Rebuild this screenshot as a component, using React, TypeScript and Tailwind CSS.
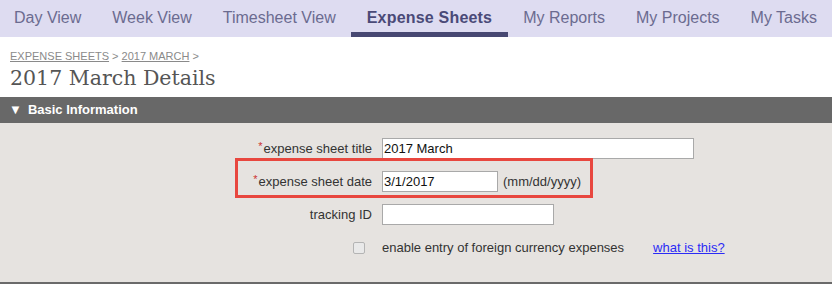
export default function App() {
  const tabs = [
    "Day View",
    "Week View",
    "Timesheet View",
    "Expense Sheets",
    "My Reports",
    "My Projects",
    "My Tasks",
  ];
  const active = "Expense Sheets";

  return (
    <div className="w-[832px] h-[284px] overflow-hidden bg-white font-['Liberation_Sans',Arial,sans-serif]">
      {/* top tabs */}
      <div className="h-[37px] bg-[#dedcf1] flex">
        <div className="flex -ml-[1.5px]">
          {tabs.map((t) => (
            <div
              key={t}
              className={`h-[37px] px-[15.5px] pt-[9px] text-[16px] leading-[18px] whitespace-nowrap ${
                t === active
                  ? "font-bold text-[#4a4a78] border-b-[5px] border-[#474872] tracking-[0.2px]"
                  : "text-[#6b6b90]"
              }`}
            >
              {t}
            </div>
          ))}
        </div>
      </div>

      {/* breadcrumb + title */}
      <div className="pl-[10px] pt-[12.5px] h-[60px]">
        <div className="text-[11px] leading-[13px] text-[#8a8a8a]">
          <a className="underline">EXPENSE SHEETS</a> &gt; <a className="underline">2017 MARCH</a> &gt;
        </div>
        <h1 className="mt-[2px] text-[20.5px] leading-[26px] text-[#555] font-['DejaVu_Serif',Georgia,serif]">
          2017 March Details
        </h1>
      </div>

      {/* section header */}
      <div className="h-[26px] bg-[#686868] flex items-center pl-[9px] text-white text-[13px] font-bold">
        <span className="text-[13px] mr-[6px]">▼</span>
        Basic Information
      </div>

      {/* form body */}
      <div className="relative h-[161px] bg-[#e6e3e0] border-b-2 border-[#6a6a6a] pt-[15px] text-[13px] text-[#333]">
        <div className="grid grid-cols-[372px_1fr] gap-y-[12px] items-center">
          <div className="text-right">
            <span className="text-[#cc3333] text-[11px] align-top relative top-[-1px] mr-[1px]">*</span>
            expense sheet title
          </div>
          <div className="pl-[10px]">
            <input
              readOnly
              value="2017 March"
              className="block w-[312px] h-[21px] bg-white border border-[#a9a9a9] px-[1px] text-[13px] text-[#111] outline-none"
            />
          </div>

          <div className="text-right">
            <span className="text-[#cc3333] text-[11px] align-top relative top-[-1px] mr-[1px]">*</span>
            expense sheet date
          </div>
          <div className="pl-[10px] flex items-center">
            <input
              readOnly
              value="3/1/2017"
              className="block w-[116px] h-[21px] bg-white border border-[#a9a9a9] px-[1px] text-[13px] text-[#111] outline-none"
            />
            <span className="ml-[5px]">(mm/dd/yyyy)</span>
          </div>

          <div className="text-right">tracking ID</div>
          <div className="pl-[10px]">
            <input
              readOnly
              value=""
              className="block w-[172px] h-[21px] bg-white border border-[#a9a9a9] px-[1px] text-[13px] outline-none"
            />
          </div>

          <div className="h-[21px] flex items-center justify-end pr-[7px]">
            <div className="w-[12px] h-[12px] rounded-[2px] border border-[#b4b4b4] bg-[#e9e9e9]" />
          </div>
          <div className="pl-[10px] h-[21px] flex items-center">
            <span>enable entry of foreign currency expenses</span>
            <a className="ml-[29px] text-[#2b2bf5] underline">what is this?</a>
          </div>
        </div>

        {/* highlight box */}
        <div className="absolute left-[235px] top-[35px] w-[358px] h-[40px] border-[3px] border-[#e8473f]" />
      </div>
    </div>
  );
}
